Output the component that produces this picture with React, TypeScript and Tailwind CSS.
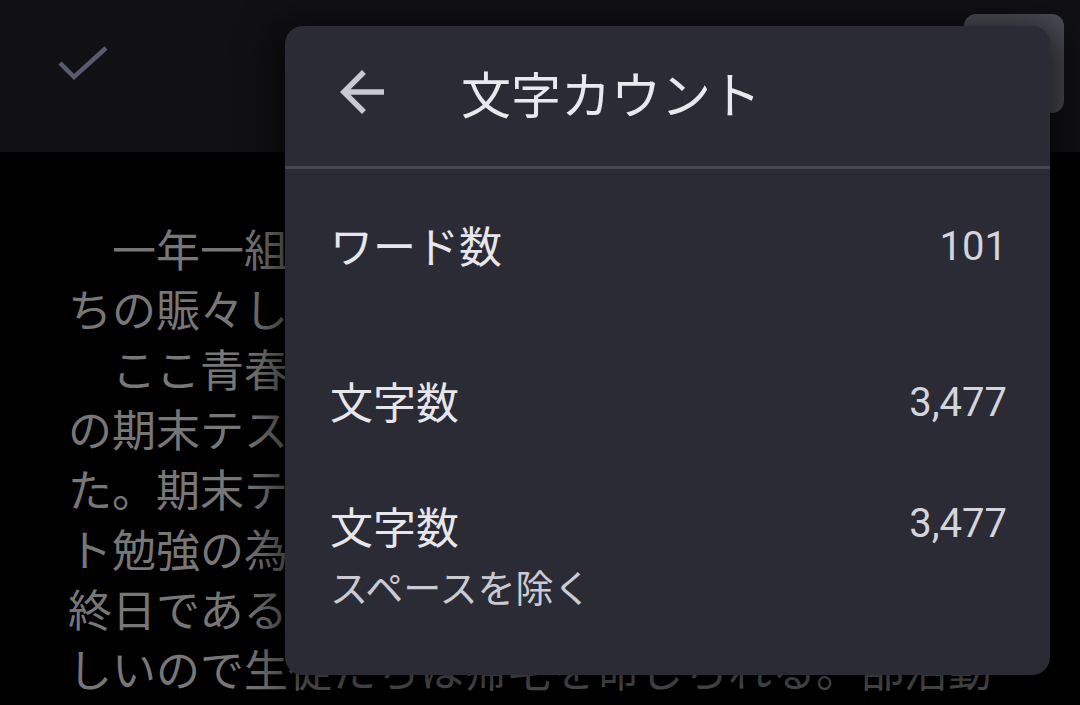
import React from "react";

const JP = "font-['Noto_Sans_CJK_JP','Noto_Sans',sans-serif]";

const storyLines = [
  "\u3000一年一組の教室は、放課後の生徒た",
  "ちの賑々しい声で満ちていた。",
  "\u3000ここ青春高校では、今日で一学期",
  "の期末テストが終わったところだっ",
  "た。期末テストの一週間前からテス",
  "ト勉強の為に部活動は休みで、最",
  "終日である今日は職員会議で先生も忙",
  "しいので生徒たちは帰宅を命じられる。部活動",
  "\u3000も今日までは休みだ。",
];

interface CountRow {
  label: string;
  value: string;
  sub?: string;
}

const rows: CountRow[] = [
  { label: "ワード数", value: "101" },
  { label: "文字数", value: "3,477" },
  { label: "文字数", value: "3,477", sub: "スペースを除く" },
];

const CheckIcon = () => (
  <svg width="56" height="44" viewBox="0 0 56 44" fill="none">
    <path d="M4 19 L18 33 L50 4" stroke="#585a70" strokeWidth="4.5" />
  </svg>
);

const BackArrow = () => (
  <svg width="66" height="66" viewBox="0 0 24 24" fill="#c9c9d3">
    <path d="M20 11H7.83l5.59-5.59L12 4l-8 8 8 8 1.41-1.41L7.83 13H20v-2z" />
  </svg>
);

export default function App() {
  return (
    <div className={`relative w-[1080px] h-[705px] overflow-hidden bg-black ${JP}`}>
      {/* top toolbar */}
      <div className="flex justify-between h-[152px] bg-[#111114] pl-[56px] pr-[16px]">
        <div className="mt-[44px]">
          <CheckIcon />
        </div>
        <div className="mt-[14px] w-[100px] h-[99px] rounded-[12px] bg-[#4e4e58]" />
      </div>

      {/* document body */}
      <div className="pl-[68px] pt-[66px] text-[44px] leading-[60px] text-[#777777]">
        {storyLines.map((line, i) => (
          <div key={i} className="whitespace-nowrap">
            {line}
          </div>
        ))}
      </div>

      {/* word count dialog */}
      <div className="absolute left-[285px] top-[26px] w-[765px] h-[649px] rounded-[18px] bg-[#2b2b35] shadow-[0_10px_36px_14px_rgba(0,0,0,0.6)] flex flex-col">
        <div className="flex items-center h-[140px] pb-[8px] pl-[44px]">
          <BackArrow />
          <span className="ml-[66px] text-[50px] leading-none text-[#e8e8ee]">文字カウント</span>
        </div>
        <div className="h-[3px] bg-[#474751]" />

        <div className="flex flex-col pl-[45px] pr-[43px]">
          {rows.map((row, i) => (
            <div
              key={i}
              className={`flex justify-between ${row.sub ? "items-start" : "items-center"} ${
                i === 0 ? "mt-[47px]" : i === 1 ? "mt-[94px]" : "mt-[63px]"
              }`}
            >
              <div className="flex flex-col">
                <span className="text-[43px] leading-[56px] text-[#e6e6ec] pb-[6px]">{row.label}</span>
                {row.sub && (
                  <span className="mt-[3px] text-[38px] leading-[48px] text-[#cacad2]">{row.sub}</span>
                )}
              </div>
              <span
                className={`font-['Roboto',sans-serif] text-[40px] leading-[56px] text-[#d4d4dc] ${
                  row.sub ? "-mt-[1px]" : ""
                }`}
              >
                {row.value}
              </span>
            </div>
          ))}
        </div>
      </div>
    </div>
  );
}
